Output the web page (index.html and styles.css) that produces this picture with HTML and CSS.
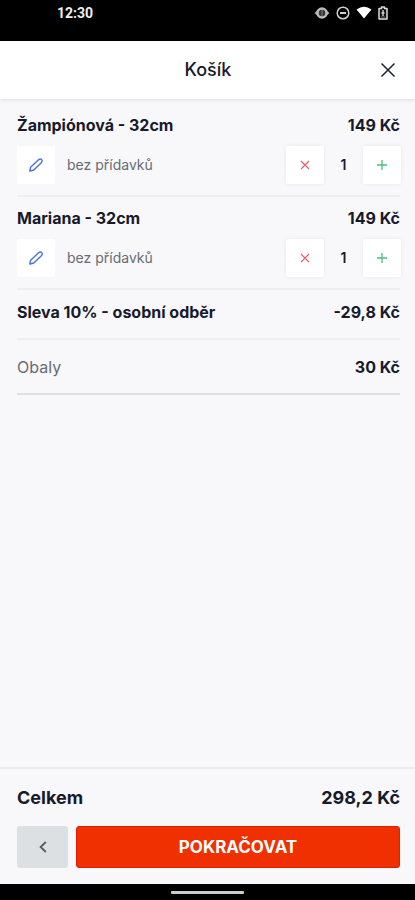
FILE: index.html
```html
<!DOCTYPE html>
<html lang="cs">
<head>
<meta charset="utf-8">
<meta name="viewport" content="width=device-width, initial-scale=1">
<title>Košík</title>
<link rel="stylesheet" href="styles.css">
</head>
<body>
<div class="status">
  <span class="clock">12:30</span>
  <div class="status-icons">
    <svg width="16" height="14" viewBox="0 0 16 14"><path d="M0.500 7L4 4v6zM15.500 7L12 4v6z" fill="#b0b0b0"/><circle cx="8" cy="7" r="4.500" fill="#333" stroke="#bcbcbc" stroke-width="2.500"/><path d="M8 4v6" stroke="#999" stroke-width=".8"/></svg>
    <svg width="14" height="14" viewBox="0 0 14 14" fill="none" stroke="#d0d0d0" stroke-width="1.500"><circle cx="7" cy="7" r="5.800"/><path d="M4 7h6" stroke-width="2"/></svg>
    <svg width="16" height="14" viewBox="0 0 16 14"><path d="M0.500 3.600Q8-2 15.500 3.600L8 12.500z" fill="#fff"/></svg>
    <svg width="10" height="14" viewBox="0 0 10 14"><path d="M3.500 1h3v1.500H9V13H1V2.500h2.500z" fill="#111" stroke="#ddd" stroke-width="1.500" stroke-linejoin="round"/><path d="M5 4v6M3.500 7h3" stroke="#c9ddd2" stroke-width="1.400"/><path d="M3 11h4" stroke="#3d8c68"/></svg>
  </div>
</div>
<header class="header">
  <h1>Košík</h1>
  <button class="close" type="button" aria-label="Zavřít"><svg width="16" height="16" viewBox="0 0 16 16" fill="none" stroke="#1d2233" stroke-width="1.500"><path d="M1.500 1.500l13 13M14.500 1.500l-13 13"/></svg></button>
</header>
<main class="list">
  <section class="item">
    <div class="line"><h2>Žampiónová - 32cm</h2><span class="price">149 Kč</span></div>
    <div class="controls">
      <button class="tile flat" type="button" aria-label="Upravit"><svg width="16" height="16" viewBox="0 0 16 16" fill="none" stroke="#4a72dc" stroke-width="1.400" stroke-linejoin="round"><path d="M1.800 14l.8-3.800 8.200-7.600q1.600-1.200 2.800 0t0 2.800L5.800 13z"/></svg></button>
      <span class="note">bez přídavků</span>
      <button class="tile" type="button" aria-label="Odebrat"><svg width="10" height="10" viewBox="0 0 10 10" stroke="#e4626b" stroke-width="1.200"><path d="M1 1l8 8M9 1L1 9"/></svg></button>
      <span class="count">1</span>
      <button class="tile" type="button" aria-label="Přidat"><svg width="10" height="10" viewBox="0 0 10 10" stroke="#4dbd80" stroke-width="1.300"><path d="M0 5h10M5 0v10"/></svg></button>
    </div>
  </section>
  <section class="item">
    <div class="line"><h2>Mariana - 32cm</h2><span class="price">149 Kč</span></div>
    <div class="controls">
      <button class="tile flat" type="button" aria-label="Upravit"><svg width="16" height="16" viewBox="0 0 16 16" fill="none" stroke="#4a72dc" stroke-width="1.400" stroke-linejoin="round"><path d="M1.800 14l.8-3.800 8.200-7.600q1.600-1.200 2.800 0t0 2.800L5.800 13z"/></svg></button>
      <span class="note">bez přídavků</span>
      <button class="tile" type="button" aria-label="Odebrat"><svg width="10" height="10" viewBox="0 0 10 10" stroke="#e4626b" stroke-width="1.200"><path d="M1 1l8 8M9 1L1 9"/></svg></button>
      <span class="count">1</span>
      <button class="tile" type="button" aria-label="Přidat"><svg width="10" height="10" viewBox="0 0 10 10" stroke="#4dbd80" stroke-width="1.300"><path d="M0 5h10M5 0v10"/></svg></button>
    </div>
  </section>
  <section class="line discount"><h2>Sleva 10% - osobní odběr</h2><span class="price">-29,8 Kč</span></section>
  <section class="line packing"><span class="label">Obaly</span><span class="price">30 Kč</span></section>
</main>
<footer class="footer">
  <div class="line total"><span>Celkem</span><span>298,2 Kč</span></div>
  <div class="actions">
    <button class="back" type="button" aria-label="Zpět"><svg width="8" height="12" viewBox="0 0 8 12" fill="none" stroke="#555c60" stroke-width="1.800"><path d="M6.800 1L1.600 6l5.200 5"/></svg></button>
    <button class="continue" type="button">POKRAČOVAT</button>
  </div>
</footer>
<div class="navbar"><div class="handle"></div></div>
</body>
</html>
```
FILE: styles.css
```css
* {
  box-sizing: border-box;
}

body {
  margin: 0;
  min-height: 100vh;
  display: flex;
  flex-direction: column;
  background: #f8f8fb;
  color: #171a2b;
  font-family: Inter, "Liberation Sans", sans-serif;
  font-size: 16px;
  line-height: 20px;
}

button {
  border: 0;
  padding: 0;
  font: inherit;
  display: flex;
  align-items: center;
  justify-content: center;
}

h1,
h2 {
  margin: 0;
  font-size: 16px;
  font-weight: 700;
}

.status {
  background: #000;
  padding: 3px 27px 18px 57px;
  display: flex;
  justify-content: space-between;
  align-items: center;
}

.clock {
  color: #eee;
  font-family: Roboto, sans-serif;
  font-size: 14px;
  font-weight: 700;
}

.status-icons {
  display: flex;
  gap: 6px;
  align-items: center;
}

.header {
  background: #fff;
  padding: 19px 15px 19px 16px;
  display: grid;
  grid-template-columns: 24px 1fr 24px;
  align-items: center;
  box-shadow: 0 1px 4px #0000001c;
}

.header h1 {
  grid-column: 2;
  text-align: center;
  font-size: 18px;
  font-weight: 500;
}

.close {
  background: none;
  height: 20px;
}

.list {
  flex: 1;
  padding: 5px 15px 0 17px;
}

.item {
  padding: 11px 0 11px;
  border-bottom: 2px solid #efeff2;
}

.line {
  display: flex;
  justify-content: space-between;
}

.price {
  font-weight: 700;
}

.controls {
  display: flex;
  align-items: center;
  margin: 11px -1px 0 0;
}

.tile {
  width: 38px;
  height: 38px;
  background: #fff;
  border-radius: 2px;
  box-shadow: 0 0 4px #00000012;
}

.flat {
  box-shadow: none;
}

.note {
  flex: 1;
  margin-left: 12px;
  color: #686b73;
  font-size: 14px;
}

.count {
  width: 39px;
  text-align: center;
  font-size: 14px;
  font-weight: 600;
}

.discount {
  padding: 12px 0 16px;
  border-bottom: 2px solid #efeff2;
}

.packing {
  padding: 17px 0 16px;
  border-bottom: 2px solid #dedfe2;
}

.label {
  color: #686b73;
}

.footer {
  padding: 19px 15px 16px 17px;
  border-top: 2px solid #ededf0;
}

.total {
  font-size: 18px;
  font-weight: 700;
}

.actions {
  display: flex;
  gap: 8px;
  margin-top: 18px;
}

.back,
.continue {
  height: 42px;
  border-radius: 3px;
}

.back {
  width: 51px;
  background: #dce0e2;
}

.continue {
  flex: 1;
  background: #f03000;
  border: 1px solid #e51c06;
  color: #fff;
  font-size: 17px;
  font-weight: 700;
}

.navbar {
  background: #000;
  height: 16px;
  display: flex;
  justify-content: center;
  align-items: center;
}

.handle {
  width: 73px;
  height: 3px;
  border-radius: 1px;
  background: #cfcccf;
}
```
